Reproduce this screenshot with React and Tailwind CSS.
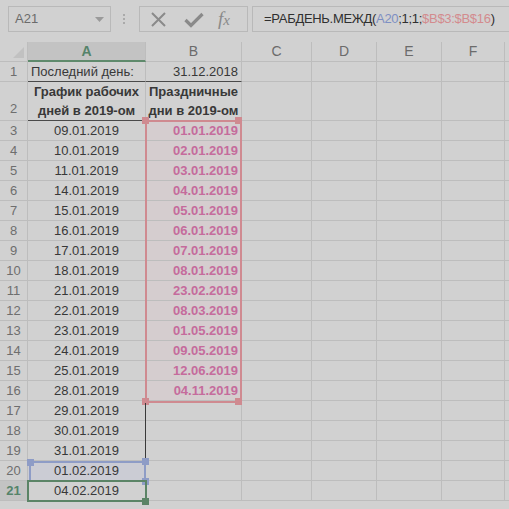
import React from "react";

const colA = [
  "09.01.2019", "10.01.2019", "11.01.2019", "14.01.2019", "15.01.2019",
  "16.01.2019", "17.01.2019", "18.01.2019", "21.01.2019", "22.01.2019",
  "23.01.2019", "24.01.2019", "25.01.2019", "28.01.2019", "29.01.2019",
  "30.01.2019", "31.01.2019", "01.02.2019", "04.02.2019",
];
const colB = [
  "01.01.2019", "02.01.2019", "03.01.2019", "04.01.2019", "05.01.2019",
  "06.01.2019", "07.01.2019", "08.01.2019", "23.02.2019", "08.03.2019",
  "01.05.2019", "09.05.2019", "12.06.2019", "04.11.2019",
];

const font = { fontFamily: '"Liberation Sans", Arial, sans-serif' };

function Toolbar() {
  return (
    <div className="flex h-[42px] items-start pt-[6px]">
      <div className="ml-[8px] flex h-[26px] w-[103px] shrink-0 items-center justify-between border border-[#b9b9b9] pl-[6px] pr-[6px] text-[13px] text-[#6b6b6b]">
        <span>A21</span>
        <svg width="9" height="5" viewBox="0 0 9 5">
          <path d="M0 0h9L4.5 5z" fill="#9a9a9a" />
        </svg>
      </div>
      <div className="ml-[12px] mt-[8px] flex shrink-0 flex-col gap-[2px]">
        <span className="block h-[2px] w-[2px] bg-[#aaaaaa]" />
        <span className="block h-[2px] w-[2px] bg-[#aaaaaa]" />
        <span className="block h-[2px] w-[2px] bg-[#aaaaaa]" />
      </div>
      <div className="ml-[14px] flex h-[26px] w-[109px] shrink-0 items-center border border-[#b9b9b9]">
        <svg className="ml-[10px]" width="17" height="17" viewBox="0 0 17 17">
          <path d="M2 2L15 15M15 2L2 15" stroke="#8a8a8a" strokeWidth="2" fill="none" />
        </svg>
        <svg className="ml-[17px]" width="20" height="17" viewBox="0 0 20 17">
          <path d="M1.5 9L7 14.5L18.5 3" stroke="#8a8a8a" strokeWidth="3.2" fill="none" />
        </svg>
        <span
          className="ml-[14px] text-[19px] italic text-[#8a8a8a]"
          style={{ fontFamily: '"Liberation Serif", serif' }}
        >
          f<span className="text-[15px]">x</span>
        </span>
      </div>
      <div className="ml-[4px] flex h-[26px] min-w-0 flex-1 items-center whitespace-nowrap border-y border-l border-[#b9b9b9] pl-[11px] text-[13px] tracking-[-0.3px] text-[#2f2f2f]">
        <span>=РАБДЕНЬ.МЕЖД(</span>
        <span className="text-[#7d8fc3]">A20</span>
        <span>;1;1;</span>
        <span className="text-[#d38b8e]">$B$3:$B$16</span>
        <span>)</span>
      </div>
    </div>
  );
}

const widths = ["w-[28px]", "w-[118px]", "w-[96px]", "w-[70px]", "w-[65px]", "w-[65px]", "w-[63px]"];
const letters = ["", "A", "B", "C", "D", "E", "F"];

function HeaderRow() {
  return (
    <div className="flex h-[20px]">
      {letters.map((l, i) => {
        if (i === 0) {
          return (
            <div key={i} className={`${widths[i]} relative shrink-0 border-r border-b border-[#bdbdbd]`}>
              <svg className="absolute right-[3px] bottom-[3px]" width="11" height="11" viewBox="0 0 11 11">
                <path d="M11 0V11H0z" fill="#c1c1c1" />
              </svg>
            </div>
          );
        }
        if (i === 1) {
          return (
            <div
              key={i}
              className={`${widths[i]} flex shrink-0 items-center justify-center border-r border-b-2 border-r-[#bdbdbd] border-b-[#5f8a6c] bg-[#c3c3c3] text-[14px] font-bold text-[#55836a]`}
            >
              {l}
            </div>
          );
        }
        return (
          <div
            key={i}
            className={`${widths[i]} flex shrink-0 items-center justify-center border-r border-b border-[#bdbdbd] text-[14px] text-[#6b6b6b]`}
          >
            {l}
          </div>
        );
      })}
      <div className="flex-1 border-b border-[#bdbdbd]" />
    </div>
  );
}

function Row({ n, height = "h-[20px]", a, b, aClass = "", bClass = "", active = false, numAlign = "items-center", rowBg = "" }) {
  return (
    <div className={`flex ${height}`}>
      <div
        className={`${widths[0]} flex shrink-0 ${numAlign} justify-center border-r border-b border-[#bdbdbd] text-[13px] ${
          active ? "bg-[#c3c3c3] font-bold text-[#55836a]" : "text-[#6e6e6e]"
        }`}
      >
        {n}
      </div>
      <div className={`${widths[1]} flex shrink-0 items-center border-r border-b border-[#bdbdbd] text-[13px] text-[#383838] ${rowBg} ${aClass}`}>
        {a}
      </div>
      <div className={`${widths[2]} flex shrink-0 items-center border-r border-b border-[#bdbdbd] text-[13px] ${bClass}`}>
        {b}
      </div>
      {widths.slice(3).map((w, i) => (
        <div key={i} className={`${w} shrink-0 border-r border-b border-[#bdbdbd]`} />
      ))}
      <div className="flex-1 border-b border-[#bdbdbd]" />
    </div>
  );
}

function Handle({ className }) {
  return <span className={`absolute h-[7px] w-[7px] ${className}`} />;
}

export default function App() {
  return (
    <div className="h-[509px] w-[509px] overflow-hidden bg-[#d1d1d1]" style={font}>
      <Toolbar />
      <div className="relative">
        <HeaderRow />
        <Row
          n={1}
          a={<span className="pl-[3px]">Последний день:</span>}
          b={<span className="w-full pr-[3px] text-right text-[#383838]">31.12.2018</span>}
          aClass="!border-b-[#4a4a4a]"
          bClass="!border-b-[#4a4a4a]"
        />
        <Row
          n={2}
          height="h-[39px]"
          numAlign="items-end pb-[2px]"
          a={
            <span className="w-full text-center font-bold leading-[19px]">
              График рабочих
              <br />
              дней в 2019-ом
            </span>
          }
          b={
            <span className="w-full text-center font-bold leading-[19px] text-[#383838]">
              Праздничные
              <br />
              дни в 2019-ом
            </span>
          }
          aClass="!border-b-[#4a4a4a]"
        />
        {colA.map((d, i) => {
          const n = i + 3;
          const bVal = colB[i];
          return (
            <Row
              key={n}
              n={n}
              active={n === 21}
              rowBg={n === 20 ? "bg-[#cbccd4]" : ""}
              a={<span className="w-full text-center">{d}</span>}
              b={
                bVal ? (
                  <span className="w-full pr-[3px] text-right font-bold text-[#c56b9c]">{bVal}</span>
                ) : null
              }
              bClass={bVal ? "bg-[#d5cdcf]" : ""}
            />
          );
        })}

        {/* reference range B3:B16 */}
        <div className="pointer-events-none absolute left-[145px] top-[78px] h-[283px] w-[97px] border-2 border-[#cf8a90]" />
        <Handle className="left-[142px] top-[75px] bg-[#cf8a90]" />
        <Handle className="left-[235px] top-[75px] bg-[#cf8a90]" />
        <Handle className="left-[142px] top-[356px] bg-[#cf8a90]" />
        <Handle className="left-[235px] top-[356px] bg-[#cf8a90]" />

        {/* border on A17:A19 */}
        <div className="absolute left-[145px] top-[361px] h-[58px] w-[1px] bg-[#3a3a3a]" />

        {/* reference A20 */}
        <div className="pointer-events-none absolute left-[29px] top-[419px] h-[21px] w-[117px] border-2 border-[#8e9cc6]" />
        <Handle className="left-[27px] top-[417px] h-[5px] w-[5px] bg-[#8e9cc6]" />
        <Handle className="left-[142px] top-[416px] bg-[#8e9cc6]" />
        <Handle className="left-[142px] top-[436px] bg-[#8e9cc6]" />

        {/* active cell A21 */}
        <div className="pointer-events-none absolute left-[27px] top-[438px] h-[22px] w-[120px] border-2 border-[#5b8466]" />
        <Handle className="left-[142px] top-[456px] bg-[#5b8466]" />
      </div>
    </div>
  );
}
